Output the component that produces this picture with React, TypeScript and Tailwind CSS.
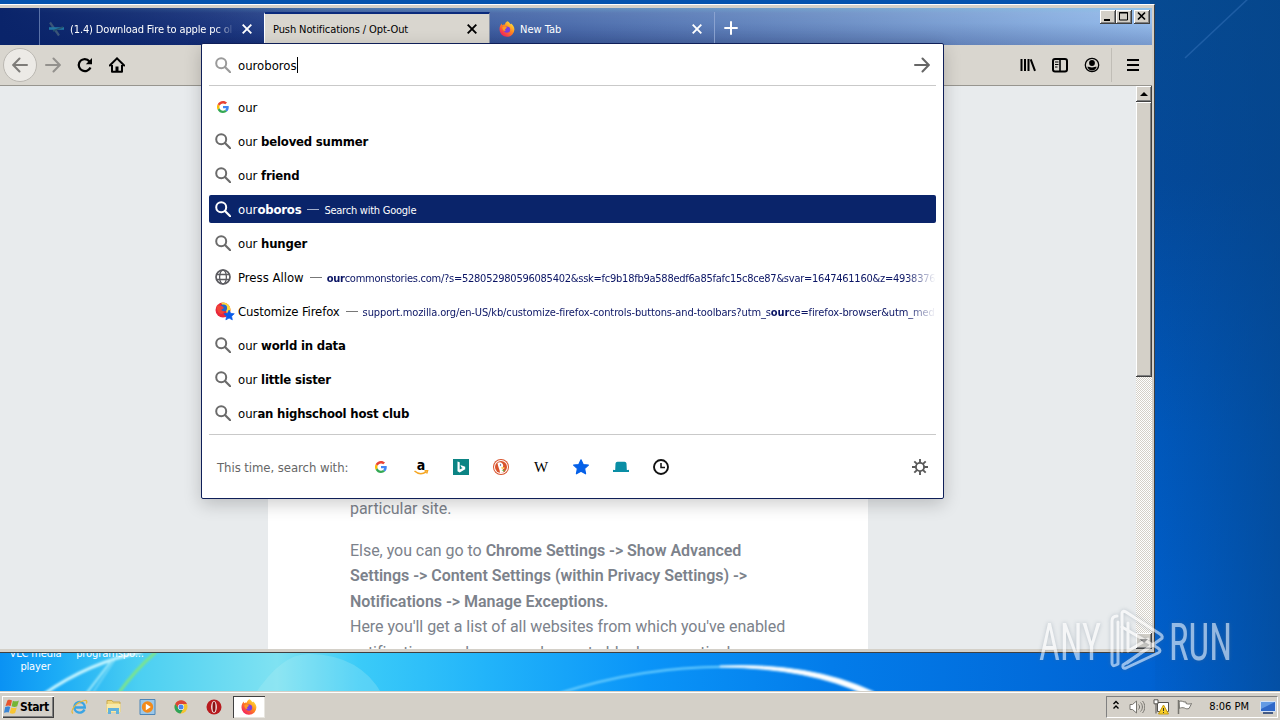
import { ReactNode } from "react";
import clsx from "clsx";

type Row = {
  icon: "google" | "search" | "globe" | "bookmark";
  typed?: string;
  rest?: string;
  title?: string;
  url?: ReactNode;
  action?: string;
  selected?: boolean;
};

const rows: Row[] = [
  { icon: "google", typed: "our" },
  { icon: "search", typed: "our ", rest: "beloved summer" },
  { icon: "search", typed: "our ", rest: "friend" },
  { icon: "search", typed: "our", rest: "oboros", action: "Search with Google", selected: true },
  { icon: "search", typed: "our ", rest: "hunger" },
  {
    icon: "globe",
    title: "Press Allow",
    url: (
      <span className="tracking-[-.25px]">
        <b>our</b>commonstories.com/?s=528052980596085402&amp;ssk=fc9b18fb9a588edf6a85fafc15c8ce87&amp;svar=1647461160&amp;z=4938376
      </span>
    ),
  },
  {
    icon: "bookmark",
    title: "Customize Firefox",
    url: (
      <span className="tracking-[-.12px]">
        support.mozilla.org/en-US/kb/customize-firefox-controls-buttons-and-toolbars?utm_s<b>our</b>ce=firefox-browser&amp;utm_med
      </span>
    ),
  },
  { icon: "search", typed: "our ", rest: "world in data" },
  { icon: "search", typed: "our ", rest: "little sister" },
  { icon: "search", typed: "our", rest: "an highschool host club" },
];

function SearchIcon({ className }: { className?: string }) {
  return (
    <svg viewBox="0 0 16 16" className={clsx("size-4 shrink-0", className)} fill="none" stroke="currentColor">
      <circle cx="6.2" cy="6.2" r="5" strokeWidth="2" />
      <path d="M10 10l5.2 5.2" strokeWidth="2.2" strokeLinecap="round" />
    </svg>
  );
}

function GoogleIcon() {
  return (
    <svg viewBox="0 0 48 48" className="size-3 shrink-0">
      <path fill="#ea4335" d="M24 9.500c3.500 0 6.700 1.200 9.200 3.600l6.900-6.900C35.900 2.400 30.500 0 24 0 14.600 0 6.500 5.400 2.600 13.200l8 6.200C12.400 13.700 17.700 9.500 24 9.500z" />
      <path fill="#4285f4" d="M47 24.500c0-1.600-.2-3.100-.4-4.500H24v9h12.900c-.6 3-2.200 5.500-4.800 7.200l7.700 6C44.400 38 47 31.800 47 24.500z" />
      <path fill="#fbbc05" d="M10.500 28.600a14.500 14.500 0 010-9.200l-8-6.200a24 24 0 000 21.600l8-6.200z" />
      <path fill="#34a853" d="M24 48c6.500 0 11.900-2.100 15.900-5.800l-7.700-6c-2.200 1.500-4.900 2.300-8.200 2.300-6.300 0-11.600-4.200-13.500-9.900l-8 6.200C6.500 42.600 14.600 48 24 48z" />
    </svg>
  );
}

function GlobeIcon() {
  return (
    <svg viewBox="0 0 16 16" className="size-4 shrink-0" fill="none" stroke="#5c5c61" strokeWidth="1.3">
      <circle cx="8" cy="8" r="7" strokeWidth="1.7" />
      <ellipse cx="8" cy="8" rx="3.400" ry="7" />
      <path d="M1.500 5.500h13M1.500 10.500h13" />
    </svg>
  );
}

const STAR = "M8 .8l2.200 4.700 5.200.6-3.800 3.500 1 5.200L8 12.300l-4.600 2.500 1-5.200L.6 6.100l5.200-.6z";

function BookmarkIcon() {
  return (
    <svg viewBox="0 0 20 20" className="-mr-1 size-5 shrink-0">
      <circle cx="8" cy="9" r="7.500" fill="#e8283c" />
      <path d="M6 1.800a7.500 7.500 0 019.500 8L12 14l-1-5z" fill="#ffd83d" />
      <circle cx="8.500" cy="7" r="3.600" fill="#2467c9" />
      <path d="M2 4c1 0 3 1 5 1l2 2-3 2 4 2-3 2c-4 0-6-5-5-9z" fill="#f04438" />
      <g transform="translate(8.500 8.500) scale(.7)">
        <path d={STAR} fill="#0a5bea" stroke="#0a5bea" />
      </g>
    </svg>
  );
}

function FirefoxIcon({ className }: { className?: string }) {
  return (
    <svg viewBox="0 0 16 16" className={clsx("shrink-0", className)}>
      <defs>
        <linearGradient id="fx" x1=".85" y1=".1" x2=".2" y2=".9">
          <stop offset="0" stopColor="#ffe23a" />
          <stop offset=".45" stopColor="#ff8a1e" />
          <stop offset="1" stopColor="#f5245c" />
        </linearGradient>
      </defs>
      <path d="M8.600.2c1.500.8 2.300 2 2.700 3l.8-.7c2 1.600 3.300 3.600 3.300 6A7.400 7.400 0 018 15.800 7.400 7.400 0 01.5 8.400C.5 6 1.400 4 2.700 2.600l.4 1.700C4 3.500 5 3.500 5.800 3.700 6.100 2 7.200.8 8.600.2z" fill="url(#fx)" />
      <circle cx="8" cy="8.600" r="3.200" fill="#7a3fe0" />
      <path d="M3.300 6.200c1.500-1 3-.8 4.700.2L6.500 7.900c-1 .5-.6 1.600.4 1.900-1.800.8-3.600-1-3.600-3.600z" fill="#ff9a24" />
    </svg>
  );
}

function CloseIcon({ className }: { className?: string }) {
  return (
    <svg viewBox="0 0 10 10" className={clsx("size-2.5 shrink-0", className)} stroke="currentColor" strokeWidth="1.9">
      <path d="M.7.7l8.600 8.600M9.300.7L.7 9.300" />
    </svg>
  );
}

function Tabs() {
  return (
    <div className="flex h-[37px] shrink-0 bg-[linear-gradient(90deg,#0a246a_0,rgba(10,36,106,.75)_6%,rgba(10,36,106,0)_28%),linear-gradient(180deg,rgba(150,215,230,.35)_0,rgba(255,255,255,.1)_5px,rgba(255,255,255,.06)_40%,rgba(0,0,60,.17)_100%),linear-gradient(90deg,#0a246a_0,#1a3682_18%,#3e60a4_45%,#6589c2_72%,#8fb8ea_100%)] text-[11px] text-white">
      <div className="w-10 border-r border-[#5a72a8]" />
      <div className="flex w-56 items-center pt-1 pl-2">
        <svg viewBox="0 0 18 18" className="size-[18px] shrink-0" fill="none">
          <path d="M2 2.500l9 13" stroke="#3b5578" strokeWidth="2.200" />
          <path d="M1 8.500h15" stroke="#2276a3" strokeWidth="2.600" />
          <path d="M5 11l10-4" stroke="#25506e" strokeWidth="1.500" />
        </svg>
        <span className="mt-[3px] ml-1 w-[165px] overflow-hidden whitespace-nowrap tracking-[-.14px] [mask-image:linear-gradient(90deg,#000_88%,transparent_100%)]">
          (1.4) Download Fire to apple pc ol
        </span>
        <CloseIcon className="ml-[7px]" />
      </div>
      <div className="mt-1 flex w-[226px] items-center border-t-2 border-r border-l border-t-[#0a2a7c] border-r-[#8a94a8] border-l-white bg-[#d9d6cf] pl-2 text-black">
        <span className="mt-0.5 w-[194px] whitespace-nowrap tracking-[-.1px]">Push Notifications / Opt-Out</span>
        <CloseIcon className="-mt-px" />
      </div>
      <div className="mt-1 flex w-[225px] items-center border-r border-[#8aa2d0] pl-[9px]">
        <FirefoxIcon className="size-4" />
        <span className="mt-[3px] ml-[5px] w-[172px]">New Tab</span>
        <CloseIcon className="mt-px" />
      </div>
      <svg viewBox="0 0 14 14" className="mt-[13px] ml-[9px] size-3.5" stroke="#fff" strokeWidth="2">
        <path d="M7 .3v13.400M.3 7h13.400" />
      </svg>
      <div className="mt-[2px] mr-[2px] ml-auto flex h-3.5 text-black">
        <WinButton>
          <path d="M4 10h6" strokeWidth="2" />
        </WinButton>
        <WinButton>
          <path d="M3.500 2.500h8v7.500h-8zM3 3h9" />
        </WinButton>
        <span className="w-0.5" />
        <WinButton>
          <path d="M4 2.500l7 7M11 2.500l-7 7" strokeWidth="1.700" />
        </WinButton>
      </div>
    </div>
  );
}

function WinButton({ children }: { children: ReactNode }) {
  return (
    <span className="h-3.5 w-4 bg-[#d4d0c8] shadow-[inset_-1px_-1px_#404040,inset_1px_1px_#fff,inset_-2px_-2px_#808080]">
      <svg viewBox="0 0 16 14" className="h-3.5 w-4" fill="none" stroke="#000">
        {children}
      </svg>
    </span>
  );
}

function Toolbar() {
  return (
    <div className="flex h-[41px] shrink-0 items-center border-b border-[#97958f] bg-[#d9d6cf]">
      <span className="ml-[3px] flex size-[34px] items-center justify-center rounded-full border border-[#bbb8b2] bg-[#eceae6]">
        <svg viewBox="0 0 16 16" className="size-4" fill="none" stroke="#7e7c79" strokeWidth="2" strokeLinecap="round">
          <path d="M15 8H1.500M7.500 1.500L1.200 8l6.300 6.500" />
        </svg>
      </span>
      <svg viewBox="0 0 16 16" className="ml-2 size-4" fill="none" stroke="#93918d" strokeWidth="2" strokeLinecap="round">
        <path d="M1 8h13.500M8.500 1.500L14.800 8l-6.300 6.500" />
      </svg>
      <svg viewBox="0 0 16 16" className="ml-4 size-4" fill="none" stroke="#000" strokeWidth="2.200">
        <path d="M13.500 10.500A6 6 0 112.300 5.500C4 1.800 9.500.8 12.500 4.500" />
        <path d="M15 1v6.200H8.800z" fill="#000" stroke="none" />
      </svg>
      <svg viewBox="0 0 16 16" className="ml-4 size-4" fill="none" stroke="#000" strokeWidth="2">
        <path d="M.8 8.500L8 1.400l7.200 7.100" strokeLinecap="round" />
        <path d="M3 8v6.800h10V8" strokeLinejoin="round" />
        <path d="M8 15V9.500" strokeWidth="3" />
      </svg>
      <svg viewBox="0 0 16 16" className="ml-auto size-4" stroke="#000" strokeWidth="2">
        <path d="M1.500 2v12M5 2v12M8.500 2v12M10.700 2.300l4.300 11.500" />
      </svg>
      <svg viewBox="0 0 16 16" className="ml-4 size-4" fill="none" stroke="#000">
        <rect x="1" y="2" width="14" height="12.500" rx="2" strokeWidth="2" />
        <path d="M8 2v12" strokeWidth="1.600" />
        <path d="M3 5h3.500M3 7.500h3.500M3 10h2.500" />
      </svg>
      <svg viewBox="0 0 16 16" className="ml-4 size-4">
        <circle cx="8" cy="8" r="6.700" fill="none" stroke="#000" strokeWidth="1.300" />
        <circle cx="8" cy="6" r="2.900" />
        <path d="M3.300 9.700c1.500 0 2.700.7 4.700.7s3.200-.7 4.700-.7c-.7 2.200-2.300 3.700-4.700 3.700s-4-1.500-4.700-3.700z" />
      </svg>
      <span className="ml-[11px] h-[34px] w-px bg-[#c0bdb6]" />
      <svg viewBox="0 0 16 16" className="mr-[11px] ml-[13px] size-4" stroke="#000" strokeWidth="2">
        <path d="M2 3h12M2 8h12M2 13h12" />
      </svg>
    </div>
  );
}

function ScrollButton({ down }: { down?: boolean }) {
  return (
    <svg viewBox="0 0 16 16" className="h-4 w-4 shrink-0 bg-[#d4d0c8] shadow-[inset_-1px_-1px_#404040,inset_1px_1px_#fff,inset_-2px_-2px_#808080]">
      <path d={down ? "M4 6h8l-4 4z" : "M4 10h8L8 6z"} />
    </svg>
  );
}

function Page() {
  return (
    <div className="flex min-h-0 flex-1 bg-[#e8ebed]">
      <div className="ml-[268px] w-[600px] overflow-hidden bg-white pt-[410px] pl-[82px] font-[Roboto,sans-serif] text-[16px] leading-[25.5px] tracking-[-.035px] whitespace-nowrap text-[#7c828b] [font-stretch:normal]">
        <p>particular site.</p>
        <p className="mt-4">
          Else, you can go to <b className="font-semibold">Chrome Settings -&gt; Show Advanced</b>
        </p>
        <p className="font-semibold">Settings -&gt; Content Settings (within Privacy Settings) -&gt;</p>
        <p className="font-semibold">Notifications -&gt; Manage Exceptions.</p>
        <p>Here you'll get a list of all websites from which you've enabled</p>
        <p>notifications and you can choose to block any particular</p>
      </div>
      <div className="ml-auto flex w-4 flex-col bg-[repeating-conic-gradient(#fff_0_25%,#d4d0c8_0_50%)] bg-[length:2px_2px]">
        <ScrollButton />
        <div className="h-[275px] bg-[#d4d0c8] shadow-[inset_-1px_-1px_#404040,inset_1px_1px_#fff,inset_-2px_-2px_#808080]" />
        <div className="flex-1" />
        <ScrollButton down />
      </div>
    </div>
  );
}

function Suggestion({ row }: { row: Row }) {
  return (
    <div
      className={clsx(
        "my-[3px] flex h-7 items-center overflow-hidden rounded-[2px] pl-1.5 whitespace-nowrap",
        row.selected ? "bg-[#0a246a] text-white" : "text-black"
      )}
    >
      <span className="flex w-[23px] shrink-0 items-center">
        {row.icon === "google" && (
          <span className="ml-0.5">
            <GoogleIcon />
          </span>
        )}
        {row.icon === "search" && <SearchIcon className={row.selected ? "text-white" : "text-[#6b6b6b]"} />}
        {row.icon === "globe" && <GlobeIcon />}
        {row.icon === "bookmark" && <BookmarkIcon />}
      </span>
      {row.title ? (
        <span className={clsx("mt-0.5", row.icon === "bookmark" && "tracking-[-.12px]")}>{row.title}</span>
      ) : (
        <span className="mt-0.5 whitespace-pre">
          {row.typed}
          <b className="tracking-[-.2px]">{row.rest}</b>
        </span>
      )}
      {(row.url || row.action) && (
        <>
          <span className={clsx("mr-[5px] ml-1.5 h-px w-3 shrink-0", row.selected ? "bg-[#a5b0cc]" : "bg-[#777]")} />
          <span
            className={clsx(
              "mt-[5px] min-w-0 flex-1 overflow-hidden text-[11px] tracking-[-.24px]",
              row.url && "text-[#0a1464] [mask-image:linear-gradient(90deg,#000_95%,transparent_100%)]"
            )}
          >
            {row.url || row.action}
          </span>
        </>
      )}
    </div>
  );
}

function SearchEngines() {
  return (
    <div className="flex flex-1 items-center pl-2 text-[13px] text-[#666]">
      <span className="mt-0.5 w-[155px] tracking-[-.06px] whitespace-nowrap">This time, search with:</span>
      <div className="mt-px flex items-center gap-6">
        <span className="ml-px flex size-4 items-center justify-center">
          <GoogleIcon />
        </span>
        <span className="relative flex size-4 justify-center text-[14px] leading-[13px] font-bold text-black">
          a
          <svg viewBox="0 0 16 5" className="absolute bottom-0 left-0 w-4" fill="none" stroke="#f5a623" strokeWidth="1.500">
            <path d="M1.500 1c4 3.500 8 3.200 11.500 1M11.500.8h3l-.8 2.700" />
          </svg>
        </span>
        <svg viewBox="0 0 16 16" className="size-4">
          <path fill="#0c8484" d="M0 0h16v16H0z" />
          <path d="M4.500 2.500l2.200.8v7.300l3-1.700-1.400-.7-.9-2.200 4.800 1.700v2.500L6.700 13.500l-2.200-1.300z" fill="#fff" />
        </svg>
        <svg viewBox="0 0 16 16" className="size-4">
          <circle cx="8" cy="8" r="8" fill="#d9532c" />
          <circle cx="8" cy="8" r="7" fill="#fff" />
          <circle cx="8" cy="8" r="6" fill="#d9532c" />
          <path d="M4.500 4c2.500-1.800 5.500-.5 5.700 2.500l-.4 2 2 .5-2 1.200.8 3.200-3.600.5C7 11 4.800 7.500 4.500 4z" fill="#fff" />
          <path d="M8.200 8.200l4 .2-3.300 1.700z" fill="#fdc42f" />
          <path d="M8.500 11l2.800-.2v2z" fill="#5eb84c" />
          <circle cx="7.500" cy="6" r=".7" fill="#2d4f8e" />
        </svg>
        <span className="flex size-4 items-center justify-center font-['Liberation_Serif',serif] text-[15px] text-black">W</span>
        <svg viewBox="0 0 16 16" className="size-4">
          <path d={STAR} fill="#0560e8" stroke="#0560e8" strokeWidth="1.200" strokeLinejoin="round" />
        </svg>
        <svg viewBox="0 0 16 16" className="size-4" fill="#0a8ea5">
          <path d="M2.500 4.500a2 2 0 012-1.800h7a2 2 0 012 1.800L13.800 11H2.200zM1 11h14a1 1 0 011 2H0a1 1 0 011-2z" />
        </svg>
        <svg viewBox="0 0 16 16" className="size-4" fill="none" stroke="#111">
          <circle cx="8" cy="8" r="7" strokeWidth="1.900" />
          <path d="M8 4v4.500h4" strokeWidth="1.500" />
        </svg>
      </div>
      <svg viewBox="0 0 16 16" className="mt-px mr-2 ml-auto size-4" fill="none" stroke="#5a5a5a" strokeWidth="1.900">
        <circle cx="8" cy="8" r="4.100" />
        <path d="M8 4V0M8 16v-4M0 8h4M12 8h4M2.300 2.300l2.900 2.900M10.800 10.800l2.900 2.900M2.300 13.700l2.900-2.900M10.800 5.200l2.900-2.900" />
      </svg>
    </div>
  );
}

function UrlbarPopup() {
  return (
    <div className="absolute top-[43px] left-[201px] flex h-[456px] w-[743px] flex-col rounded-[2px] border border-[#0f1f58] bg-white px-[7px] text-[13px] shadow-[0_5px_18px_rgba(0,0,0,.2)]">
      <div className="flex h-[42px] shrink-0 items-center border-b border-[#c9c9c9] pr-1.5 pl-1.5">
        <SearchIcon className="text-[#9a9a9a]" />
        <span className="mt-0.5 ml-[7px]">ouroboros</span>
        <span className="h-4 w-px bg-black" />
        <svg viewBox="0 0 16 16" className="ml-auto size-4" fill="none" stroke="#666" strokeWidth="2" strokeLinecap="round">
          <path d="M1 8h13.500M8.500 1.500L14.800 8l-6.300 6.500" />
        </svg>
      </div>
      <div className="h-[349px] shrink-0 border-b border-[#c9c9c9] pt-1">
        {rows.map((row, i) => (
          <div key={i} className="flow-root h-[34px]">
            <Suggestion row={row} />
          </div>
        ))}
      </div>
      <SearchEngines />
    </div>
  );
}

function Wallpaper() {
  return (
    <svg viewBox="0 0 1280 720" className="absolute inset-0 h-[720px] w-[1280px]" fill="none">
      <defs>
        <linearGradient id="sky" x1="0" x2="0" y1="0" y2="1">
          <stop offset="0" stopColor="#064a92" />
          <stop offset=".25" stopColor="#04499a" />
          <stop offset=".6" stopColor="#0058bc" />
          <stop offset="1" stopColor="#0062d2" />
        </linearGradient>
        <linearGradient id="edge" x1="1150" x2="1280" y1="0" y2="0" gradientUnits="userSpaceOnUse">
          <stop offset="0" stopColor="#054488" stopOpacity="0" />
          <stop offset="1" stopColor="#054488" stopOpacity=".6" />
        </linearGradient>
        <linearGradient id="glow">
          <stop offset="0" stopColor="#0a92f4" />
          <stop offset=".05" stopColor="#1cacf6" />
          <stop offset=".12" stopColor="#4bcff2" />
          <stop offset=".24" stopColor="#7fe2f2" />
          <stop offset=".31" stopColor="#3bcbf8" />
          <stop offset=".42" stopColor="#22b4fa" />
          <stop offset=".56" stopColor="#0a94f8" />
          <stop offset=".72" stopColor="#037cea" />
          <stop offset="1" stopColor="#0062d2" />
        </linearGradient>
        <filter id="soft">
          <feGaussianBlur stdDeviation=".8" />
        </filter>
      </defs>
      <path d="M0 0h1280v720H0z" fill="url(#sky)" />
      <path d="M0 0h1150v6H0z" fill="#0553ae" />
      <path d="M0 640h1155v80H0z" fill="url(#glow)" />
      <path d="M1150 0h130v720h-130z" fill="url(#edge)" />
      <path d="M1185 58L1250-3" stroke="#2f6db4" strokeWidth="1.500" opacity=".6" />
      <path d="M240 720Q275 652 310 654 360 655 382 694z" fill="#b8f0f4" opacity=".25" />
      <g filter="url(#soft)">
        <path d="M44 694Q90 662 142 652" stroke="#c8f6ff" strokeWidth="3" />
        <path d="M86 694L112 660" stroke="#a7edfb" strokeWidth="2" />
        <path d="M92 694L116 658" stroke="#a7edfb" />
        <path d="M118 694Q135 670 156 652" stroke="#7be58c" strokeWidth="3" />
        <path d="M560 693Q650 664 742 667" stroke="#6ed0ff" strokeWidth="2" />
        <path d="M720 666Q810 662 874 692L866 695Q810 668 720 667z" fill="#fff" stroke="#d8f2ff" />
      </g>
    </svg>
  );
}

function Taskbar() {
  return (
    <div className="relative mt-auto flex h-7 items-center border-t border-white bg-[#d4d0c8] text-[11px] shadow-[0_-1px_#d4d0c8]">
      <div className="ml-0.5 flex h-[22px] w-[52px] items-center pl-0.5 font-bold shadow-[inset_1px_1px_#fff,inset_-1px_-1px_#404040,inset_-2px_-2px_#808080]">
        <svg viewBox="0 0 16 16" className="size-4 shrink-0">
          <path d="M3.500 1.200c1.700-.9 3.500-.5 4.500.2L6.700 7C5 6.300 3.700 6.300 1.500 7z" fill="#e8542c" />
          <path d="M8.900 1.800c1.800.9 4 .7 6-.3l-1.700 5.700c-1.700 1-3.500.9-5.600.1z" fill="#75b535" />
          <path d="M1.200 8.100c1.700-.8 3.300-.6 5-.1l-1.500 5.600c-1.700-.6-3-.5-4.700.2z" fill="#3a86d6" />
          <path d="M7.300 8.500c1.900.8 3.700.8 5.500-.1L11.100 14c-1.800.9-3.600.9-5.400 0z" fill="#f8c532" />
        </svg>
        <span className="mt-px text-[12px] tracking-[-.4px]">Start</span>
      </div>
      <div className="ml-[17px] flex items-center gap-[17px]">
        <svg viewBox="0 0 17 16" className="h-4 w-[17px]" fill="none">
          <path d="M13.500 10.500A5.300 5.300 0 118.800 3a5.300 5.300 0 015 5.500H4" stroke="#3aa4e4" strokeWidth="2.400" />
          <path d="M2 14.500C-1 12 4 3.500 13.500 1.500c3-.4 2.500 2 1.700 3" stroke="#e8b838" strokeWidth="1.200" />
        </svg>
        <svg viewBox="0 0 17 16" className="h-4 w-[17px]">
          <path d="M2 1.500h5l1 1.500h7v10H2z" fill="#f1d67c" stroke="#c9a94c" />
          <path d="M1.500 5h14v8.500h-14z" fill="#f8e9a8" />
          <path d="M3 9h11v6h-3v-3H6v3H3z" fill="#62b2dc" />
        </svg>
        <svg viewBox="0 0 17 16" className="h-4 w-[17px]">
          <path d="M1 .5h15v15H1z" fill="#9cc7e8" stroke="#4d86b8" />
          <circle cx="8.500" cy="8" r="5.700" fill="#f28a1b" />
          <path d="M6.800 4.800l5 3.200-5 3.200z" fill="#fff" />
        </svg>
        <svg viewBox="0 0 16 16" className="size-4">
          <circle cx="8" cy="8" r="6.500" fill="#f4c430" />
          <path d="M2.200 5A6.600 6.600 0 0114 5H8L5 9z" fill="#dc4437" />
          <path d="M2.200 5A6.600 6.600 0 007.500 14.600L10 10.500 5.500 9.500z" fill="#2da35a" />
          <circle cx="8" cy="8" r="3.100" fill="#fff" />
          <circle cx="8" cy="8" r="2.500" fill="#4a84ec" />
        </svg>
        <svg viewBox="0 0 16 16" className="size-4">
          <circle cx="8" cy="8" r="7.500" fill="#b81a1e" />
          <ellipse cx="8" cy="8" rx="2.900" ry="6" fill="#f3e5e5" />
          <ellipse cx="8" cy="8" rx="1.500" ry="5.200" fill="#8a1013" />
        </svg>
      </div>
      <div className="ml-[11px] flex h-[22px] w-8 items-center justify-center bg-white shadow-[inset_1px_1px_#404040,inset_-1px_-1px_#e8e6e0]">
        <FirefoxIcon className="size-4" />
      </div>
      <div className="mr-0.5 ml-auto flex h-[22px] items-center border border-t-[#808080] border-r-white border-b-white border-l-[#808080] pr-px pl-[5px]">
        <svg viewBox="0 0 8 10" className="mb-1 h-2.5 w-2" fill="none" stroke="#000" strokeWidth="1.400">
          <path d="M1.500 4L4 1.500 6.500 4M1.500 8.500L4 6l2.500 2.500" />
        </svg>
        <svg viewBox="0 0 16 16" className="ml-[9px] size-4" fill="#fff" stroke="#77756f">
          <path d="M1 5.500h2.500L7.500 2v12l-4-3.500H1z" />
          <path d="M9.500 5.500c1.500 1.500 1.500 3.500 0 5M11.500 3.500c2.500 2.500 2.500 6.500 0 9M13.500 2c3 3.500 3 8.500 0 12" fill="none" />
        </svg>
        <svg viewBox="0 0 16 16" className="ml-2 size-4" fill="#fff" stroke="#55534f">
          <path d="M4.500 3.500h11v9h-11z" />
          <path d="M1 .8h4v4H1zM3 5v9.500" />
          <path d="M10.500 6l5 9h-10z" fill="#f8cf28" stroke="#c59a10" />
          <path d="M10.500 9v3M10.500 13v1" stroke="#333" />
        </svg>
        <svg viewBox="0 0 16 16" className="ml-2 size-4" fill="#fff" stroke="#77756f">
          <path d="M2 2.500c3-1.500 4 1 7 .5v1.500c2 1 4 .5 5.500 0-1 2-1.500 3.500-2.500 5-1.500.5-3 .5-4.500-.5-2-.5-3.500-.5-5 .5z" />
          <path d="M1.500 1v14" strokeWidth="1.500" />
        </svg>
        <span className="mt-0.5 ml-4 whitespace-nowrap">8:06 PM</span>
        <svg viewBox="0 0 16 16" className="ml-[11px] size-4">
          <path d="M.5 2.500h15v10H.5z" fill="#2f68c8" stroke="#d5e2f4" />
          <path d="M1 3h14L1 10z" fill="#639ae4" />
          <path d="M3 14h10" stroke="#16356e" strokeWidth="1.500" />
        </svg>
      </div>
    </div>
  );
}

function Watermark() {
  return (
    <svg viewBox="0 0 200 70" className="absolute top-[605px] left-[1035px] h-[70px] w-[200px] font-[Roboto,sans-serif]" fill="none" opacity=".58">
      <g fill="#fff" fontSize="52" style={{ filter: "drop-shadow(0 0 2px rgba(90,110,130,.6))" }}>
        <text x="4" y="54.500" textLength="62" lengthAdjust="spacingAndGlyphs">ANY</text>
        <text x="134" y="54.500" textLength="63" lengthAdjust="spacingAndGlyphs">RUN</text>
        {/* play mark: tall outer triangle with folded ribbons on both sides */}
        <g fill="none" stroke="#fff" strokeWidth="3" strokeLinejoin="round" strokeLinecap="round">
          <path d="M87 46V8q1-3 4-1l34 22q4 3 1 5L92 58" />
          <path d="M82 11q-5 0-5 5v42q0 4 4 2l2-1V17" />
          <path d="M87 22l36 21q4 3 0 5L91 63q-4 1-3-3l31-21" />
          <path d="M93 18v28l20-12" />
        </g>
      </g>
    </svg>
  );
}

export default function App() {
  return (
    <div className="relative flex h-[720px] w-[1280px] flex-col overflow-hidden font-['DejaVu_Sans_Condensed','DejaVu_Sans',sans-serif] text-black [font-stretch:condensed]">
      <Wallpaper />
      <div className="absolute top-[647px] left-0 flex text-center text-[11px] leading-[13px] text-white">
        <span className="w-[71px] tracking-[-.15px]">
          VLC media
          <br />
          player
        </span>
        <span className="ml-px w-[76px] tracking-[-.1px]">programspo...</span>
      </div>
      <div className="absolute top-1 left-0 flex h-[649px] w-[1155px] flex-col border-t border-r border-b border-t-white border-r-[#404040] border-b-[#404040]">
        <div className="flex min-h-0 flex-1 flex-col border-t-[3px] border-r-2 border-b-[3px] border-[#d4d0c8]">
          <Tabs />
          <Toolbar />
          <Page />
        </div>
      </div>
      <UrlbarPopup />
      <Watermark />
      <Taskbar />
    </div>
  );
}
